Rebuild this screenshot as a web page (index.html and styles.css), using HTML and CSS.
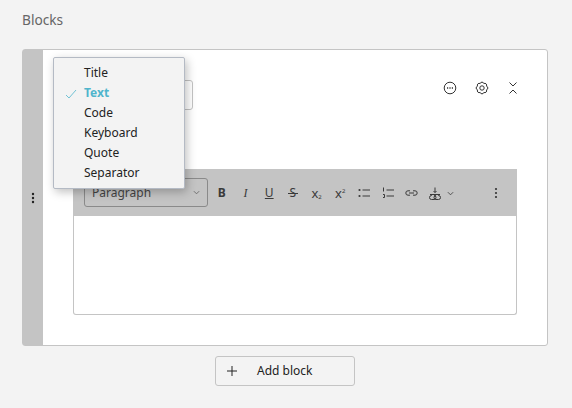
FILE: index.html
```html
<!DOCTYPE html>
<html lang="en">
<head>
    <meta charset="UTF-8">
    <title>Blocks</title>
    <link rel="stylesheet" href="styles.css">
</head>
<body>

<div class="page">
    <h2 class="heading">Blocks</h2>

    <div class="block">
        <div class="handle">
            <svg width="4" height="12" viewBox="0 0 4 12"><circle cx="2" cy="2" r="1.2"/><circle cx="2" cy="6" r="1.2"/><circle cx="2" cy="10" r="1.2"/></svg>
        </div>
        <div class="block-body">
            <div class="block-head">
                <div class="type-select"></div>
                <div class="block-actions">
                    <svg width="14" height="14" viewBox="0 0 14 14" fill="none" stroke="#333" stroke-width="1"><circle cx="7" cy="7" r="5.8"/><path d="M4 7h1.2M6.4 7h1.2M8.8 7H10" stroke-width="1.3"/></svg>
                    <svg class="gear" width="14" height="14" viewBox="0 0 14 14" fill="none" stroke="#333" stroke-width="1"><path d="M11.43 5.16A1.9 1.9 0 0 1 11.43 8.84A1.9 1.9 0 0 1 8.84 11.43A1.9 1.9 0 0 1 5.16 11.43A1.9 1.9 0 0 1 2.57 8.84A1.9 1.9 0 0 1 2.57 5.16A1.9 1.9 0 0 1 5.16 2.57A1.9 1.9 0 0 1 8.84 2.57A1.9 1.9 0 0 1 11.43 5.16z"/><circle cx="7" cy="7" r="2.2"/></svg>
                    <svg width="8" height="12" viewBox="0 0 8 12" fill="none" stroke="#333" stroke-width="1"><path d="M.5.5L4 4 7.500.5M.5 11.500L4 8l3.500 3.500"/></svg>
                </div>
            </div>

            <div class="editor">
                <div class="toolbar">
                    <div class="format-select">
                        <span>Paragraph</span>
                        <svg class="chev" width="7" height="5" viewBox="0 0 8 5"><path d="M1 1l3 3 3-3"/></svg>
                    </div>
                    <div class="tools">
                        <span class="tool tool-b">B</span>
                        <span class="tool tool-i">I</span>
                        <span class="tool tool-u">U</span>
                        <span class="tool tool-s">S</span>
                        <span class="tool tool-x">x<sub>2</sub></span>
                        <span class="tool tool-x">x<sup>2</sup></span>
                        <svg class="tool-svg" width="12" height="12" viewBox="0 0 12 12"><circle cx="1.500" cy="3" r="1.100" class="dot"/><circle cx="1.500" cy="9" r="1.100" class="dot"/><path d="M4.500 3H12M4.500 9H12"/></svg>
                        <svg class="tool-svg" width="12" height="12" viewBox="0 0 12 12"><path d="M1.500 0.500v4M1 7.500h1.500v3H1M4.500 3H12M4.500 9H12"/></svg>
                        <svg class="tool-svg tool-link" width="13" height="12" viewBox="0 0 13 12"><path d="M5 3.800H3a2.200 2.200 0 000 4.400h2M8 3.800h2a2.200 2.200 0 010 4.400H8M4 6h5"/></svg>
                        <div class="tool-embed">
                            <svg class="tool-svg" width="12" height="13" viewBox="0 0 12 13"><path d="M6 0.500v5M4.500 4l1.500 1.500L7.500 4M1 7.500h10M3 8.500H2.500a2 2 0 000 4h2.500a2 2 0 000-4M9 8.500h.5a2 2 0 010 4H7a2 2 0 010-4"/></svg>
                            <svg class="chev" width="7" height="5" viewBox="0 0 8 5"><path d="M1 1l3 3 3-3"/></svg>
                        </div>
                        <svg class="more" width="4" height="12" viewBox="0 0 4 12"><circle cx="2" cy="2" r="1.100"/><circle cx="2" cy="6" r="1.100"/><circle cx="2" cy="10" r="1.100"/></svg>
                    </div>
                </div>
                <div class="editor-area"></div>
            </div>
        </div>

        <ul class="menu">
            <li>Title</li>
            <li class="selected">
                <svg class="check" width="12" height="10" viewBox="0 0 12 10"><path d="M1 6l3 3 7-8"/></svg>
                Text
            </li>
            <li>Code</li>
            <li>Keyboard</li>
            <li>Quote</li>
            <li>Separator</li>
        </ul>
    </div>

    <div class="add-row">
        <button class="add-btn">
            <svg width="10" height="10" viewBox="0 0 10 10"><path d="M5 0v10M0 5h10"/></svg>
            <span>Add block</span>
        </button>
    </div>
</div>

</body>
</html>
```

FILE: styles.css
```css
* {
    margin: 0;
    padding: 0;
    box-sizing: border-box;
}

body {
    background-color: #f3f3f3;
    font-family: "Noto Sans", sans-serif;
    color: #222;
}

.page {
    height: 408px;
    padding: 11px 24px 0 22px;
    overflow: hidden;
}

.heading {
    font-size: 13.7px;
    font-weight: 400;
    line-height: 18px;
    color: #666;
    margin-bottom: 20px;
}

/*block card*/
.block {
    position: relative;
    display: flex;
    height: 297px;
    background-color: #fff;
    border: 1px solid #c4c4c4;
    border-radius: 3px;
}

.handle {
    width: 20px;
    background-color: #c4c4c4;
    display: flex;
    align-items: center;
    justify-content: center;
}

.handle svg {
    fill: #222;
    margin-top: 1px;
}

.block-body {
    flex: 1;
    padding: 30px;
}

.block-head {
    display: flex;
    justify-content: space-between;
    height: 89px;
}

.type-select {
    width: 120px;
    height: 30px;
    border: 1px solid #c4c4c4;
    border-radius: 3px;
}

.block-actions {
    display: flex;
    gap: 19px;
    height: 15px;
    align-items: center;
}

.gear {
    margin: 0 1px 0 -1px;
}

/*editor*/
.editor {
    width: 444px;
}

.toolbar {
    display: flex;
    align-items: center;
    height: 47px;
    padding: 0 11px;
    background-color: #c4c4c4;
}

.format-select {
    display: flex;
    align-items: center;
    justify-content: space-between;
    width: 124px;
    height: 29px;
    padding: 0 7px;
    border: 1px solid #8a8a8a;
    border-radius: 3px;
    font-size: 12px;
    color: #444;
}

.chev {
    flex: none;
    fill: none;
    stroke: #666;
    stroke-width: 1;
}

.tools {
    flex: 1;
    display: flex;
    align-items: center;
    margin-left: 2px;
    padding-top: 1px;
}

.tool {
    flex: none;
    width: 23.7px;
    text-align: center;
    font-size: 12px;
    line-height: 14px;
    color: #3a3a3a;
}

.tool-b {
    font-weight: 700;
}

.tool-i {
    font-family: "Liberation Serif", serif;
    font-style: italic;
}

.tool-u {
    text-decoration: underline;
}

/*the strike sticks out past the letter*/
.tool-s {
    position: relative;
}

.tool-s::after {
    content: "";
    position: absolute;
    left: 7px;
    right: 7px;
    top: 7px;
    height: 1px;
    background-color: #3a3a3a;
}

.tool-x {
    font-size: 13px;
}

.tool-x sub,
.tool-x sup {
    font-size: 6px;
    line-height: 0;
}

.tool-x sub {
    vertical-align: -1px;
}

.tool-svg {
    flex: none;
    fill: none;
    stroke: #3a3a3a;
    stroke-width: 1;
    margin: 0 5.85px;
}

.tool-link {
    margin: 0 5.35px;
}

.tool-svg .dot {
    fill: #3a3a3a;
    stroke: none;
}

.tool-embed {
    display: flex;
    align-items: center;
}

.tool-embed .chev {
    stroke: #444;
}

.more {
    flex: none;
    fill: #333;
    margin-left: auto;
    margin-right: 8px;
}

.editor-area {
    height: 99px;
    border: 1px solid #c4c4c4;
    border-top: 0;
    border-radius: 0 0 3px 3px;
}

/*popup menu*/
.menu {
    position: absolute;
    left: 30px;
    top: 7px;
    width: 132px;
    height: 132px;
    padding: 6px 0;
    list-style: none;
    background-color: #f3f3f3;
    border: 1px solid #b4bac4;
    border-radius: 2px;
    box-shadow: 2px 3px 10px rgba(0, 0, 0, 0.25);
}

.menu li {
    position: relative;
    height: 20px;
    padding-left: 30px;
    font-size: 12px;
    line-height: 18px;
    color: #222;
}

.menu .selected {
    font-weight: 700;
    color: #4fb5cc;
}

.check {
    position: absolute;
    left: 11px;
    top: 5px;
    fill: none;
    stroke: #4fb5cc;
    stroke-width: 0.8;
}

/*add button*/
.add-row {
    display: flex;
    justify-content: center;
    margin-top: 10px;
}

.add-btn {
    display: flex;
    align-items: center;
    width: 140px;
    height: 30px;
    padding: 0 0 1px 11px;
    background: none;
    border: 1px solid #c4c4c4;
    border-radius: 3px;
    font-family: inherit;
    font-size: 12px;
    color: #222;
}

.add-btn svg {
    stroke: #222;
    stroke-width: 1;
    margin: 1px 20px 0 0;
}
```
